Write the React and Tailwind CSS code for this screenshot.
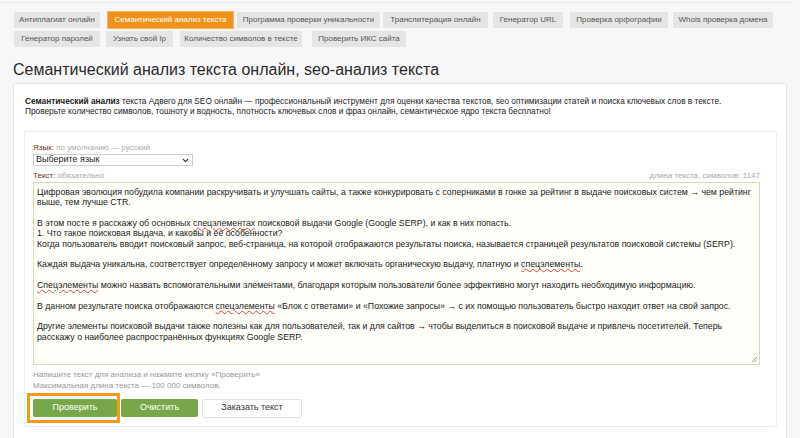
import { ChevronDown } from 'lucide-react';

const tabsRow1 = [
    { label: 'Антиплагиат онлайн', cls: 'ml-[14px] w-[86px]' },
    { label: 'Семантический анализ текста', cls: 'ml-[8px] w-[125px]', active: true },
    { label: 'Программа проверки уникальности', cls: 'ml-[4px] w-[143px]' },
    { label: 'Транслитерация онлайн', cls: 'ml-[3px] w-[105px]' },
    { label: 'Генератор URL', cls: 'ml-[5px] w-[70px]' },
    { label: 'Проверка орфографии', cls: 'ml-[7px] w-[98px]' },
    { label: 'Whois проверка домена', cls: 'ml-[5px] w-[100px]' },
];

const tabsRow2 = [
    { label: 'Генератор паролей', cls: 'ml-[14px] w-[86px]' },
    { label: 'Узнать свой Ip', cls: 'ml-[6px] w-[67px]' },
    { label: 'Количество символов в тексте', cls: 'ml-[7px] w-[122px]' },
    { label: 'Проверить ИКС сайта', cls: 'ml-[10px] w-[94px]' },
];

function Tab({ label, cls, active }) {
    return (
        <div
            className={
                cls +
                ' h-[16px] flex items-center justify-center text-[8px] whitespace-nowrap ' +
                (active
                    ? 'bg-[#ef931c] text-white shadow-[0_0_0_1px_#f7b45c]'
                    : 'bg-[#e5e5e5] text-[#555]')
            }
        >
            {label}
        </div>
    );
}

// слово с подчёркиванием орфографии
const Sp = ({ children }) => (
    <span className="underline decoration-wavy decoration-[#e0403a] decoration-[0.6px] underline-offset-[0.5px]">{children}</span>
);

export default function App() {
    return (
        <div className="w-[800px] h-[438px] overflow-hidden bg-[#f7f7f7] text-[#333]" style={{ fontFamily: '"Liberation Sans", Arial, sans-serif' }}>
            <div className="h-[3px] border-b border-[#e8e8e8] mr-[8px]" />

            {/* Tabs */}
            <div className="flex mt-[9px]">
                {tabsRow1.map((t, i) => <Tab key={i} {...t} />)}
            </div>
            <div className="flex mt-[3px]">
                {tabsRow2.map((t, i) => <Tab key={i} {...t} />)}
            </div>

            <h1 className="ml-[13px] mt-[12px] text-[16px] leading-[22px] text-[#2b2b2b]">
                Семантический анализ текста онлайн, seo-анализ текста
            </h1>

            {/* Main panel */}
            <div className="ml-[13px] w-[774px] mt-[2px] h-[400px] bg-white border border-[#e6e6e6] rounded-[3px] px-[11px] pt-[12px]">
                <p className="text-[8.3px] leading-[10px] text-[#222]">
                    <b>Семантический анализ</b> текста Адвего для SEO онлайн — профессиональный инструмент для оценки качества текстов, seo оптимизации статей и поиска ключевых слов в тексте.
                    <br />
                    Проверьте количество символов, тошноту и водность, плотность ключевых слов и фраз онлайн, семантическое ядро текста бесплатно!
                </p>

                <div className="mt-[15px] -ml-[1px] w-[753px] h-[296px] border border-[#ececec] rounded-[2px] pl-[8px] pr-[16px] pt-[11px]">
                    <div className="text-[8px] leading-[10px]">
                        <span className="text-[#6b3020]">Язык:</span>{' '}
                        <span className="text-[#aaa]">по умолчанию — русский</span>
                    </div>
                    <div className="mt-[1px] w-[160px] h-[12px] border border-[#cfcfcf] flex items-center justify-between px-[2px] text-[9px] text-[#222]">
                        <span>Выберите язык</span>
                        <ChevronDown size={9} strokeWidth={3} className="text-[#222]" />
                    </div>

                    <div className="mt-[5px] flex justify-between text-[8px] leading-[10px]">
                        <div>
                            <span className="text-[#6b3020]">Текст:</span>{' '}
                            <span className="text-[#aaa]">обязательно</span>
                        </div>
                        <span className="text-[#aaa]">длина текста, символов: 1147</span>
                    </div>

                    <div className="relative mt-[1px] h-[183px] border border-[#d9d9bc] bg-[#fffff9] px-[3px] pt-[4px] text-[8.75px] leading-[10.35px] text-[#1a1a1a] whitespace-pre-wrap">
                        {'Цифровая эволюция побудила компании раскручивать и улучшать сайты, а также конкурировать с соперниками в гонке за рейтинг в выдаче поисковых систем → чем рейтинг выше, тем лучше CTR.\n\nВ этом посте я расскажу об основных '}
                        <Sp>спецэлементах</Sp>
                        {' поисковой выдачи Google (Google SERP), и как в них попасть.\n1. Что такое поисковая выдача, и каковы и её особенности?\nКогда пользователь вводит поисковый запрос, веб-страница, на которой отображаются результаты поиска, называется страницей результатов поисковой системы (SERP).\n\nКаждая выдача уникальна, соответствует определённому запросу и может включать органическую выдачу, платную и '}
                        <Sp>спецэлементы</Sp>
                        {'.\n\n'}
                        <Sp>Спецэлементы</Sp>
                        {' можно назвать вспомогательными элементами, благодаря которым пользователи более эффективно могут находить необходимую информацию.\n\nВ данном результате поиска отображаются '}
                        <Sp>спецэлементы</Sp>
                        {' «Блок с ответами» и «Похожие запросы» → с их помощью пользователь быстро находит ответ на свой запрос.\n\nДругие элементы поисковой выдачи также полезны как для пользователей, так и для сайтов → чтобы выделиться в поисковой выдаче и привлечь посетителей. Теперь расскажу о наиболее распространённых функциях Google SERP.'}
                        <svg className="absolute right-[1px] bottom-[1px]" width="7" height="7" viewBox="0 0 7 7">
                            <path d="M6 1 L1 6 M6 3.5 L3.5 6" stroke="#9a9a9a" strokeWidth="1" />
                        </svg>
                    </div>

                    <div className="mt-[5px] text-[8px] leading-[10.5px] text-[#999]">
                        Напишите текст для анализа и нажмите кнопку «Проверить»
                        <br />
                        Максимальная длина текста — 100 000 символов.
                    </div>

                    <div className="mt-[2px] -ml-[6px] flex items-center">
                        <div className="border-[3px] border-[#f39a1e] pl-[3px] py-[3px] bg-white">
                            <button className="block w-[84px] h-[18px] bg-[#78a74a] text-white text-[9px] rounded-[2px]">Проверить</button>
                        </div>
                        <button className="ml-[1px] w-[77px] h-[18px] bg-[#78a74a] text-white text-[9px] rounded-[2px]">Очистить</button>
                        <button className="ml-[4px] w-[100px] h-[19px] bg-white border border-[#e3e3e3] text-[#333] text-[9px] rounded-[2px]">Заказать текст</button>
                    </div>
                </div>
            </div>
        </div>
    );
}
